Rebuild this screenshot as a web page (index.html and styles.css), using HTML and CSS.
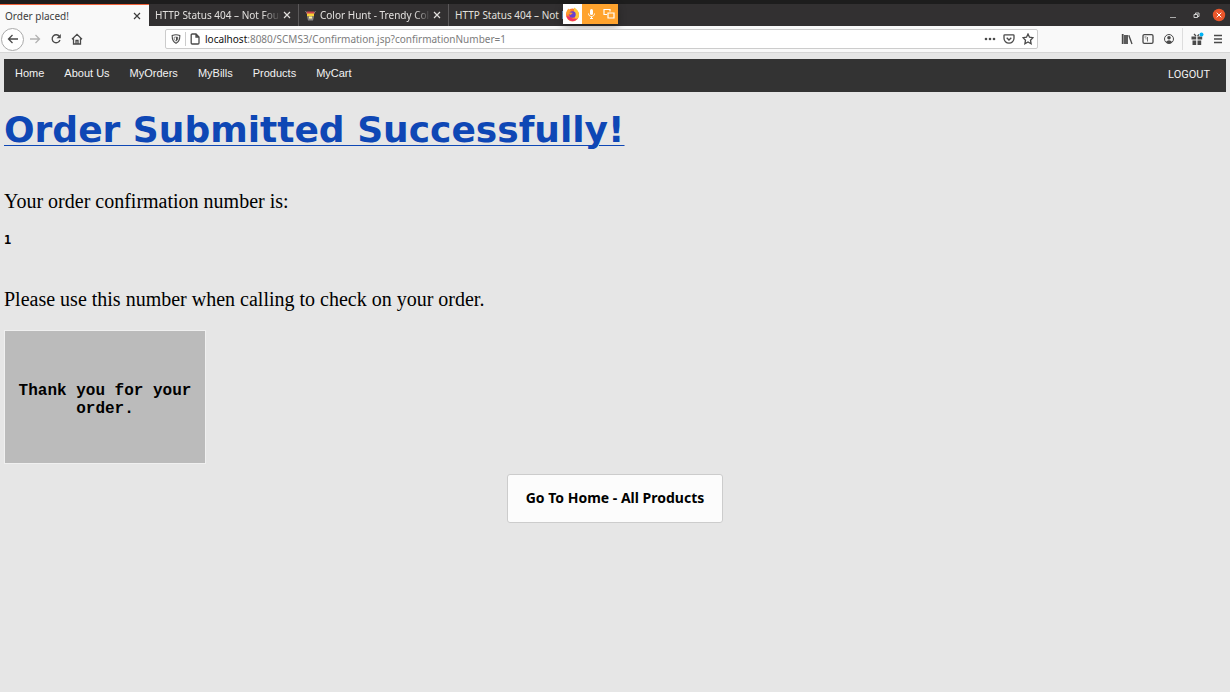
FILE: index.html
```html
<!DOCTYPE html>
<html lang="en">
<head>
<meta charset="utf-8">
<title>Order placed!</title>
<link rel="stylesheet" href="styles.css">
</head>
<body>
<header class="browser">
  <div class="desktop-bar"></div>
  <div class="tab-bar">
    <div class="tab tab-active"><span class="tab-title">Order placed!</span><button class="close" aria-label="Close tab"><svg width="8" height="8" viewBox="0 0 8 8"><path d="M1 1l6 6M7 1L1 7"/></svg></button></div>
    <div class="tab"><span class="tab-title fade">HTTP Status 404 – Not Foun</span><button class="close" aria-label="Close tab"><svg width="8" height="8" viewBox="0 0 8 8"><path d="M1 1l6 6M7 1L1 7"/></svg></button></div>
    <div class="tab"><svg class="favicon" width="11" height="11" viewBox="0 0 11 11"><path d="M.5 1l2 3M10.500 1l-2 3" stroke="#8d8380"/><path d="M2 1.500h7l.5 2.500h-8z" fill="#c9444f"/><path d="M2 3.500h7v3H2z" fill="#f7d038"/><path d="M2 6.500h7L8 10.500H3z" fill="#8a8686"/><path d="M4 6.500h3v2H4z" fill="#fff3a0"/></svg><span class="tab-title fade">Color Hunt - Trendy Colo</span><button class="close" aria-label="Close tab"><svg width="8" height="8" viewBox="0 0 8 8"><path d="M1 1l6 6M7 1L1 7"/></svg></button></div>
    <div class="tab tab-last"><span class="tab-title">HTTP Status 404 – Not F</span>
      <div class="sharing">
        <span class="share-logo"><svg width="15" height="15" viewBox="0 0 15 15"><circle cx="7.500" cy="8" r="6.500" fill="#ff7a2f"/><path d="M1.200 7C1 4 3 2.500 3.500 1.500 4 3 5 3 6 3.500L3 8z" fill="#ff9f2e"/><path d="M9 .5c2 1 5 3.500 5 7.500 0 2-1 4-2.500 5L9 9z" fill="#ffc837"/><path d="M1.500 9c1 5 8 7 11.500 2-3 2-6 1-7.500-1z" fill="#f1306a"/><circle cx="7.500" cy="7.500" r="3.200" fill="#6b3fd0"/><path d="M4 6c2-1 3 0 4 0-1 1-2 1-2 2-1 0-2-1-2-2z" fill="#ff9f2e"/></svg></span>
        <button class="share-button" aria-label="Microphone in use"><svg width="9" height="12" viewBox="0 0 9 12"><rect x="3" y="1" width="3" height="6" rx="1.500" fill="#fff"/><path d="M1.500 5.500c0 4 6 4 6 0M4.500 8.500v2M3 10.500h3" stroke="#fff" fill="none"/></svg></button>
        <button class="share-button" aria-label="Screen shared"><svg width="12" height="12" viewBox="0 0 12 12"><path d="M4 6.500H1v-5h6v2M5 5h6v5H5z" stroke="#fff" fill="none" stroke-width="1.200"/></svg></button>
      </div>
    </div>
    <div class="window-buttons">
      <button aria-label="Minimize"><svg width="14" height="14" viewBox="0 0 14 14"><path d="M4 9.500h6" stroke="#aaa"/></svg></button>
      <button aria-label="Restore"><svg width="14" height="14" viewBox="0 0 14 14"><path d="M5 6.500h3.500v3H5zM6.500 6V5H10v3.500H9" stroke="#ccc" fill="none"/></svg></button>
      <button aria-label="Close window"><svg width="14" height="14" viewBox="0 0 14 14"><circle cx="7" cy="7" r="6.200" fill="#e9562b"/><path d="M4.700 4.700l4.600 4.600M9.300 4.700L4.700 9.300" stroke="#fff"/></svg></button>
    </div>
  </div>
  <div class="toolbar">
    <button class="tool tool-back" aria-label="Back"><svg width="12" height="12" viewBox="0 0 12 12"><path d="M11 6H1.500M5.500 2l-4 4 4 4"/></svg></button>
    <button class="tool tool-dim" aria-label="Forward"><svg width="12" height="12" viewBox="0 0 12 12"><path d="M1 6h9.500M6.500 2l4 4-4 4"/></svg></button>
    <button class="tool" aria-label="Reload"><svg width="12" height="12" viewBox="0 0 12 12"><path d="M9.500 3.500A4 4 0 1 0 10 7"/><path d="M10.800 1v4.300H6.500z" class="solid"/></svg></button>
    <button class="tool" aria-label="Home"><svg width="12" height="12" viewBox="0 0 12 12"><path d="M1 6.200L6 1.300l5 4.900M2.500 5.500V11h7V5.500M5 11V7.500h2V11"/></svg></button>
    <div class="address">
      <button class="tool" aria-label="Tracking protection"><svg width="10" height="10" viewBox="0 0 10 10"><path d="M1.200 1.500Q5 0 8.800 1.500C9 6 7.500 8 5 9.300 2.500 8 1 6 1.200 1.500z" stroke-width="1.100"/><path d="M5 3l1.800.3C6.800 5.500 6.200 6.500 5 7.200 3.800 6.500 3.200 5.500 3.200 3.300z" stroke-width=".6"/><path d="M5 3l1.800.3C6.800 5.500 6.200 6.500 5 7.200z" class="solid"/></svg></button>
      <button class="tool tool-info" aria-label="Site information"><svg width="10" height="12" viewBox="0 0 10 12"><path d="M1.200 2a1 1 0 0 1 1-1H6l3 3v6a1 1 0 0 1-1 1H2.200a1 1 0 0 1-1-1zM6 1v3h3"/></svg></button>
      <span class="url"><span class="url-host">localhost</span>:8080/SCMS3/Confirmation.jsp?confirmationNumber=1</span>
      <button class="tool" aria-label="Page actions"><svg width="12" height="12" viewBox="0 0 12 12"><g class="solid"><circle cx="2" cy="6" r="1.300"/><circle cx="6" cy="6" r="1.300"/><circle cx="10" cy="6" r="1.300"/></g></svg></button>
      <button class="tool" aria-label="Save to Pocket"><svg width="12" height="12" viewBox="0 0 12 12"><path d="M1.800 1.800h8.400q.8 0 .8.800v2.600a5 5 0 0 1-10 0V2.600q0-.8.8-.8zM3.700 4.700L6 7l2.300-2.300"/></svg></button>
      <button class="tool" aria-label="Bookmark"><svg width="12" height="12" viewBox="0 0 12 12"><path d="M6 1l1.500 3.200 3.500.5-2.500 2.500.6 3.500L6 9l-3.100 1.700.6-3.500L1 4.700l3.500-.5z"/></svg></button>
    </div>
    <div class="tools-right">
      <button class="tool" aria-label="Library"><svg width="12" height="12" viewBox="0 0 12 12"><path d="M1.700 1v10M4 2v9M6 2v9" stroke-width="1.800"/><path d="M7.800 2.200L11 11"/></svg></button>
      <button class="tool" aria-label="Sidebars"><svg width="12" height="12" viewBox="0 0 12 12"><rect x="1" y="1.700" width="10" height="8.600" rx="1.300"/><path d="M5.500 4v4.500M2.500 4h2M3.500 5.800h1" stroke-width=".8"/></svg></button>
      <button class="tool" aria-label="Account"><svg width="12" height="12" viewBox="0 0 12 12"><circle cx="6" cy="6" r="4.500" stroke-width="1"/><circle cx="6" cy="4.800" r="1.800" class="solid"/><path d="M2.800 9Q6 5.500 9.200 9 6 12 2.800 9z" class="solid"/></svg></button>
      <span class="tool-rule"></span>
      <button class="tool" aria-label="What's new"><svg width="14" height="14" viewBox="0 0 14 14"><path d="M1.500 4.500h4.700v3H1.500zM7.500 4.500h4.700v3H7.500zM2.500 8.500h3.700V13H2.500zM7.500 8.500h3.700V13H7.500z" class="solid"/><path d="M6 4L4 2M7.500 4L9 2.500"/><circle cx="11.500" cy="2.500" r="2" class="dot"/></svg></button>
      <button class="tool" aria-label="Menu"><svg width="12" height="12" viewBox="0 0 12 12"><path d="M2 2.500h8M2 6h8M2 9.500h8"/></svg></button>
    </div>
  </div>
</header>
<nav class="nav">
  <a href="#">Home</a><a href="#">About Us</a><a href="#">MyOrders</a><a href="#">MyBills</a><a href="#">Products</a><a href="#">MyCart</a>
  <a href="#" class="logout">LOGOUT</a>
</nav>
<main class="page">
  <h1 class="title">Order Submitted Successfully!</h1>
  <p class="message">Your order confirmation number is:</p>
  <p class="number">1</p>
  <p class="message">Please use this number when calling to check on your order.</p>
  <div class="thanks">Thank you for your order.</div>
  <button class="home-button">Go To Home - All Products</button>
</main>
</body>
</html>
```
FILE: styles.css
```css
* { box-sizing: border-box; }
body {
  margin: 0;
  min-height: 100vh;
  background: #e6e6e6;
  color: #000;
  font-family: "Liberation Serif", serif;
}
button {
  margin: 0;
  padding: 0;
  border: 0;
  background: none;
  color: inherit;
  font: inherit;
}
svg { display: block; }
.browser { font: 10px/14px "Noto Sans", sans-serif; }
.desktop-bar { height: 4px; background: #1d1d1d; }
.tab-bar {
  display: flex;
  height: 22px;
  background: #323031;
  color: #e2e0de;
}
.tab {
  display: flex;
  align-items: center;
  width: 150px;
  padding: 0 7px 0 6px;
  border-right: 1px solid #5a5859;
}
.tab-active {
  width: 149px;
  padding: 0 8px 0 5px;
  border-top: 1px solid #f0623a;
  border-right: 0;
  background: #f9f9f9;
  color: #3c3c3c;
}
.tab-last { width: 169px; padding-right: 0; border-right: 0; }
.tab-title { flex: 1; overflow: hidden; white-space: nowrap; }
.fade {
  -webkit-mask-image: linear-gradient(to right, #000 85%, transparent);
  mask-image: linear-gradient(to right, #000 85%, transparent);
}
.favicon { margin-right: 4px; fill: none; }
.close { margin-left: 2px; }
.close svg { fill: none; stroke: currentColor; stroke-width: 1.2; }
.sharing {
  display: flex;
  align-self: flex-start;
  height: 20px;
  box-shadow: 0 3px 8px rgba(0, 0, 0, 0.3);
}
.share-logo, .share-button { display: flex; align-items: center; justify-content: center; }
.share-logo { width: 19px; background: #fff; }
.share-button { width: 18px; background: #ffa32e; }
.window-buttons {
  display: flex;
  align-items: center;
  gap: 9px;
  margin-left: auto;
  padding-right: 4px;
}
.toolbar {
  display: flex;
  align-items: center;
  height: 27px;
  padding: 0 2px 0 1px;
  border-bottom: 1px solid #d6d6d6;
  background: #f9f9f9;
}
.tool { display: flex; align-items: center; justify-content: center; width: 21px; height: 20px; }
.tool svg { fill: none; stroke: #4a4a4a; stroke-width: 1.3; }
.tool .solid { fill: #4a4a4a; stroke: none; }
.tool .dot { fill: #00b3f4; stroke: none; }
.tool-back {
  width: 23px;
  height: 23px;
  border: 1px solid #aaa;
  border-radius: 50%;
  background: #fff;
}
.tool-dim { opacity: 0.4; }
.address {
  display: flex;
  align-items: center;
  flex: 1;
  height: 20px;
  margin: 0 78px;
  border: 1px solid #ccc;
  border-radius: 2px;
  background: #fff;
}
.address .tool { width: 19px; height: 14px; }
.address .tool-info { border-left: 1px solid #ccc; }
.url { flex: 1; padding-left: 1px; color: #7c7c7c; }
.url-host { color: #111; }
.tools-right { display: flex; align-items: center; }
.tool-rule { width: 1px; height: 22px; margin: 0 3px; background: #ddd; }
.nav {
  display: flex;
  align-items: center;
  height: 33px;
  margin: 6px 4px 0;
  padding: 0 16px 5px 11px;
  gap: 20px;
  background: #333;
  font: 11px/14px "Liberation Sans", sans-serif;
}
.nav a { color: #f2f2f2; text-decoration: none; }
.nav .logout {
  margin: 4px 0 0 auto;
  font: 11px/14px Roboto, sans-serif;
}
.page { padding: 0 4px; }
.title {
  margin: 16px 0 37px;
  color: #0e47b5;
  font: bold 36px/44px "DejaVu Sans", sans-serif;
  text-decoration: underline 1px;
  text-underline-offset: 3px;
}
.message { margin: 0 0 19px; font-size: 20px; line-height: 24px; }
.number { margin: 0 0 39px; font: bold 12px/16px "DejaVu Sans Mono", monospace; }
.thanks {
  display: flex;
  align-items: center;
  width: 202px;
  height: 134px;
  padding: 6px 12px 0;
  border: 1px solid #f0f0f0;
  background: #bbb;
  font: bold 16px/18px "Liberation Mono", monospace;
  text-align: center;
}
.home-button {
  display: block;
  margin: 10px auto 0;
  padding: 13px 18px 15px;
  border: 1px solid #ccc;
  border-radius: 3px;
  background: #fcfcfc;
  font: bold 14px/19px "Noto Sans", sans-serif;
}
```
